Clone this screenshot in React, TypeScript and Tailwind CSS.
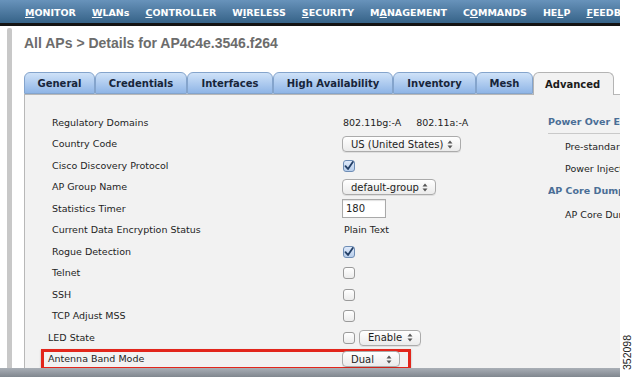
import React from "react";

const navItems = [
  { pre: "", u: "M", post: "ONITOR" },
  { pre: "", u: "W", post: "LANs" },
  { pre: "", u: "C", post: "ONTROLLER" },
  { pre: "W", u: "I", post: "RELESS", active: true },
  { pre: "", u: "S", post: "ECURITY" },
  { pre: "M", u: "A", post: "NAGEMENT" },
  { pre: "C", u: "O", post: "MMANDS" },
  { pre: "HE", u: "L", post: "P" },
  { pre: "", u: "F", post: "EEDBACK" },
];

const tabs = [
  { name: "General", w: "w-[71px]" },
  { name: "Credentials", w: "w-[92px]" },
  { name: "Interfaces", w: "w-[86px]" },
  { name: "High Availability", w: "w-[120px]" },
  { name: "Inventory", w: "w-[83px]" },
  { name: "Mesh", w: "w-[57px]" },
  { name: "Advanced", w: "w-[81px]", active: true },
];

function Arrows() {
  return (
    <svg width="6" height="9" viewBox="0 0 6 9" className="shrink-0">
      <path d="M3 0.5 L5.5 3.5 H0.5 Z" fill="#555" />
      <path d="M3 8.5 L5.5 5.5 H0.5 Z" fill="#555" />
    </svg>
  );
}

function Select({ label, w }: { label: string; w: string }) {
  return (
    <div
      className={`${w} h-[16px] flex items-center justify-between pl-[8px] pr-[7px] rounded-[4px] border border-[#ababab] bg-gradient-to-b from-white to-[#ebebeb] text-[10px] text-[#1c1c1c] shadow-[0_1px_0_rgba(0,0,0,0.08)]`}
    >
      <span>{label}</span>
      <Arrows />
    </div>
  );
}

function Checkbox({ checked }: { checked?: boolean }) {
  return (
    <div
      className={`w-[12px] h-[12px] rounded-[3px] border flex items-center justify-center ${
        checked
          ? "border-[#6e8db5] bg-gradient-to-b from-[#dfeafb] to-[#b7cdea]"
          : "border-[#9a9a9a] bg-gradient-to-b from-white to-[#ececec]"
      }`}
    >
      {checked ? (
        <svg width="10" height="10" viewBox="0 0 10 10">
          <path
            d="M1.5 5.2 L4 8 L8.8 1"
            fill="none"
            stroke="#233f66"
            strokeWidth="1.8"
            strokeLinecap="round"
            strokeLinejoin="round"
          />
        </svg>
      ) : null}
    </div>
  );
}

function Row({ label, children }: { label: string; children?: React.ReactNode }) {
  return (
    <div className="h-[21.5px] flex items-center">
      <div className="w-[290px]">{label}</div>
      <div className="flex items-center gap-[4px]">{children}</div>
    </div>
  );
}

export default function App() {
  return (
    <div className="w-[634px] h-[377px] overflow-hidden bg-white flex font-['DejaVu_Sans',sans-serif] text-[9.5px] text-[#1e1e1e]">
      <div className="w-[620px] h-full flex flex-col">
        {/* top navigation */}
        <div className="h-[26px] shrink-0 flex flex-col">
          <div className="h-[23px] bg-gradient-to-b from-[#6893bb] to-[#366388] flex items-end pl-[17px] overflow-hidden">
            {navItems.map((item) => (
              <div
                key={item.u + item.post}
                className={`h-full px-[8px] flex items-center font-bold text-white whitespace-nowrap border-b-[3px] -mb-[3px] ${
                  item.active ? "border-[#f0a032]" : "border-transparent"
                }`}
              >
                {item.pre}
                <span className="underline underline-offset-[1px]">{item.u}</span>
                {item.post}
              </div>
            ))}
          </div>
          <div className="h-[3px] bg-[#141414]" />
        </div>

        <div className="flex-1 flex min-h-0">
          {/* left gutter */}
          <div className="w-[24px] shrink-0 flex">
            <div className="ml-[7px] mt-[2px] w-[5px] bg-[#c8c8c8] rounded-t-[2px]" />
          </div>

          <div className="flex-1 flex flex-col min-w-0">
            <div className="h-[46px] shrink-0 pt-[9px] leading-[16px] font-['Liberation_Sans',sans-serif] font-bold text-[14px] text-[#6c6c6c]">
              All APs &gt; Details for AP4c4e.3546.f264
            </div>

            {/* tabs */}
            <div className="h-[22px] shrink-0 flex items-end">
              {tabs.map((t) =>
                t.active ? (
                  <div
                    key={t.name}
                    className={`${t.w} h-[23px] -mb-px relative z-10 rounded-t-[6px] border border-b-0 border-[#b4b4b4] bg-[#f2f2f2] flex items-center pl-[11px] font-bold text-[10px] text-[#1b1b1b]`}
                  >
                    {t.name}
                  </div>
                ) : (
                  <div
                    key={t.name}
                    className={`${t.w} h-[22px] rounded-t-[6px] border border-[#84a4cc] bg-gradient-to-b from-[#cfe2f8] to-[#8fb5e6] flex items-center justify-center font-bold text-[10px] text-[#17253a]`}
                  >
                    {t.name}
                  </div>
                )
              )}
            </div>

            {/* panel */}
            <div className="flex-1 bg-[#f2f2f2] border-l border-t border-[#b8b8b8] pt-[17px] flex min-h-0">
              <div className="w-[523px] shrink-0 pl-[27px]">
                <Row label="Regulatory Domains">
                  <span className="ml-[1px]">802.11bg:-A</span>
                  <span className="ml-[11px]">802.11a:-A</span>
                </Row>
                <Row label="Country Code">
                  <Select label="US (United States)" w="w-[119px]" />
                </Row>
                <Row label="Cisco Discovery Protocol">
                  <div className="ml-[1px]">
                    <Checkbox checked />
                  </div>
                </Row>
                <Row label="AP Group Name">
                  <Select label="default-group" w="w-[94px]" />
                </Row>
                <Row label="Statistics Timer">
                  <div className="w-[44px] h-[19px] bg-white border border-[#a9a9a9] shadow-[inset_0_1px_1px_rgba(0,0,0,0.12)] flex items-center pl-[3px] text-[10px]">
                    180
                  </div>
                </Row>
                <Row label="Current Data Encryption Status">
                  <span className="ml-[2px]">Plain Text</span>
                </Row>
                <Row label="Rogue Detection">
                  <div className="ml-[1px]">
                    <Checkbox checked />
                  </div>
                </Row>
                <Row label="Telnet">
                  <div className="ml-[1px]">
                    <Checkbox />
                  </div>
                </Row>
                <Row label="SSH">
                  <div className="ml-[1px]">
                    <Checkbox />
                  </div>
                </Row>
                <Row label="TCP Adjust MSS">
                  <div className="ml-[1px]">
                    <Checkbox />
                  </div>
                </Row>
                <div className="h-[21.5px] flex items-center -ml-[4px]">
                  <div className="w-[294px]">LED State</div>
                  <div className="flex items-center ml-[1px] gap-[4px]">
                    <Checkbox />
                    <Select label="Enable" w="w-[62px]" />
                  </div>
                </div>
                <div className="h-[21.5px] flex items-center">
                  <div className="-ml-[11px] w-[370px] h-[21px] border-[3px] border-[#e2261c] shadow-[0_1px_2px_rgba(0,0,0,0.25)] flex items-center">
                    <div className="w-[298px] pl-[4px]">Antenna Band Mode</div>
                    <Select label="Dual" w="w-[58px]" />
                  </div>
                </div>
              </div>

              {/* right column */}
              <div className="flex-1 min-w-0 whitespace-nowrap overflow-hidden">
                <div className="h-[22px] flex items-center border-b border-[#c9c9c9] font-bold text-[#4a6e96]">
                  Power Over Ethernet Settings
                </div>
                <div className="mt-[3px] h-[21px] flex items-center pl-[17px]">Pre-standard 802.3af switches</div>
                <div className="h-[22px] flex items-center pl-[17px]">Power Injector State</div>
                <div className="h-[22px] flex items-center font-bold text-[#4a6e96]">AP Core Dump</div>
                <div className="mt-[2px] h-[22px] flex items-center pl-[17px]">AP Core Dump</div>
              </div>
            </div>
          </div>
        </div>

        <div className="h-[9px] shrink-0 bg-gradient-to-b from-[#a9afb6] to-[#80878f]" />
      </div>

      {/* right margin with figure number */}
      <div className="flex-1 flex flex-col justify-end items-center pb-[7px]">
        <div className="[writing-mode:vertical-rl] rotate-180 font-['Liberation_Sans',sans-serif] text-[10.5px] leading-none text-[#222]">
          352098
        </div>
      </div>
    </div>
  );
}
